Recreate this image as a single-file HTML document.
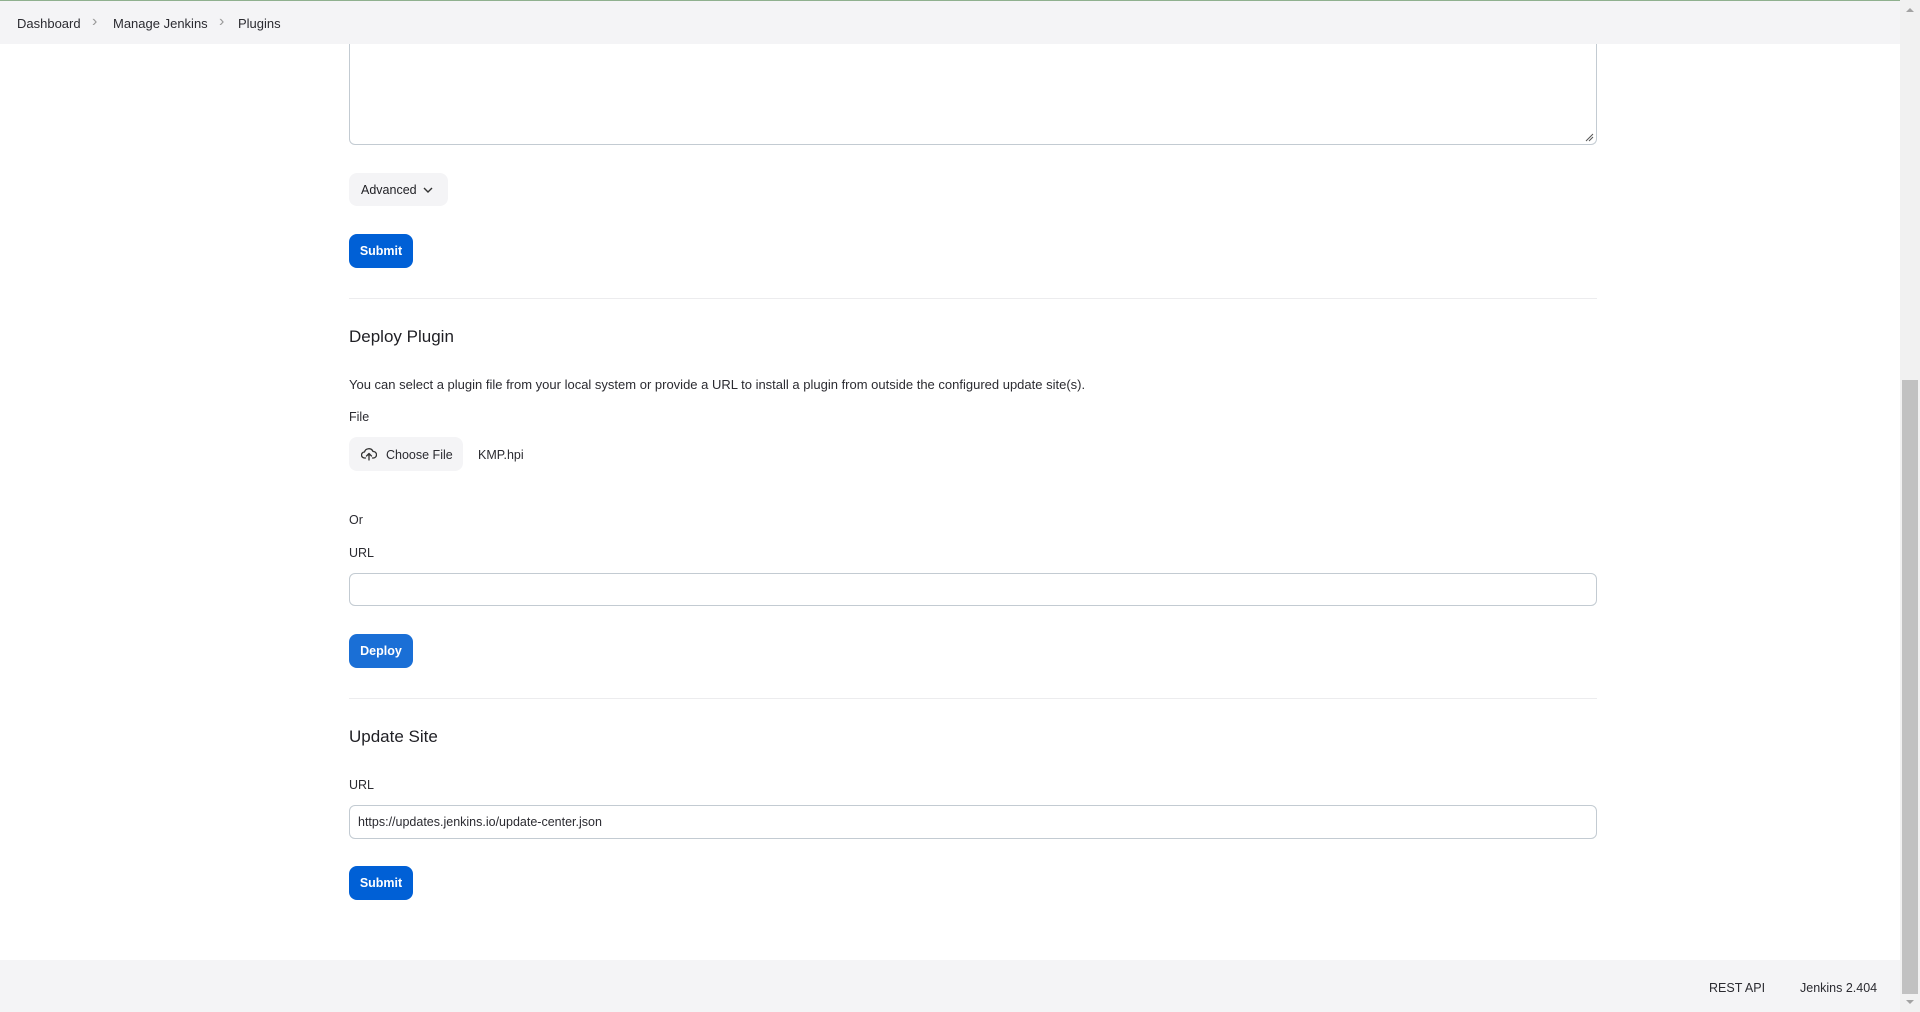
<!DOCTYPE html>
<html><head><meta charset="utf-8"><style>
*{box-sizing:border-box;margin:0;padding:0}
body{width:1920px;height:1012px;overflow:hidden;background:#fff;font-family:"Liberation Sans",sans-serif;color:#1f1f24;position:relative}
.a{position:absolute;white-space:nowrap}
.hdr{position:absolute;left:0;top:0;width:1900px;height:44px;background:#f4f4f6;border-top:1px solid #8fb08f}
.bc{position:absolute;top:15px;font-size:13px;color:#2b2b31}
.sep{position:absolute;top:12px;font-size:16px;color:#999}
.box{position:absolute;left:349px;width:1248px;border:1.5px solid #c3cbd2;border-radius:6px;background:#fff}
.btn{position:absolute;left:349px;width:64px;height:34px;background:#0060d6;border-radius:8px;color:#fff;font-weight:bold;font-size:12.5px;text-align:center;line-height:35px}
.hr{position:absolute;left:349px;width:1248px;height:1px;background:#ececee}
.h{position:absolute;left:349px;font-size:17px;color:#1f1f24}
.t{position:absolute;font-size:12.5px;color:#2b2b31}
</style></head><body>
<div class="hdr">
<span class="bc" style="left:17px">Dashboard</span><span class="sep" style="left:92px">&#8250;</span>
<span class="bc" style="left:113px">Manage Jenkins</span><span class="sep" style="left:219px">&#8250;</span>
<span class="bc" style="left:238px">Plugins</span>
</div>
<div class="box" style="top:44px;height:101px;border-top:none;border-radius:0 0 6px 6px"></div>
<svg class="a" style="left:1584px;top:132px" width="10" height="10"><path d="M2 9L9 2M5 9L9 5" stroke="#555" stroke-width="1"/></svg>
<div class="a" style="left:349px;top:173px;width:99px;height:33px;background:#f4f4f6;border-radius:8px;font-size:12.5px;line-height:35px;padding-left:12px">Advanced
<svg style="position:absolute;left:74px;top:13px" width="10" height="8"><path d="M1 2L5 6L9 2" fill="none" stroke="#333" stroke-width="1.4"/></svg></div>
<div class="btn" style="top:234px">Submit</div>
<div class="hr" style="top:298px"></div>
<div class="h" style="top:327px">Deploy Plugin</div>
<div class="t" style="left:349px;top:377px;font-size:13px">You can select a plugin file from your local system or provide a URL to install a plugin from outside the configured update site(s).</div>
<div class="t" style="left:349px;top:410px">File</div>
<div class="a" style="left:349px;top:437px;width:114px;height:34px;background:#f4f4f6;border-radius:8px;font-size:12.5px;line-height:36px;padding-left:37px;color:#2b2b31">Choose File
<svg style="position:absolute;left:12px;top:10px" width="16" height="14" viewBox="0 0 16 14"><path d="M4.5 11H3.5A3 3 0 0 1 3.5 5A4.5 4.5 0 0 1 12 4.5A3 3 0 0 1 12.5 11H11.5M8 13V6.5M5.5 9L8 6.5L10.5 9" fill="none" stroke="#333" stroke-width="1.3" stroke-linecap="round" stroke-linejoin="round"/></svg></div>
<div class="t" style="left:478px;top:448px">KMP.hpi</div>
<div class="t" style="left:349px;top:513px">Or</div>
<div class="t" style="left:349px;top:546px">URL</div>
<div class="box" style="top:573px;height:33px"></div>
<div class="btn" style="top:634px;background:#1a6fd6">Deploy</div>
<div class="hr" style="top:698px"></div>
<div class="h" style="top:727px">Update Site</div>
<div class="t" style="left:349px;top:778px">URL</div>
<div class="box" style="top:805px;height:34px;font-size:12.5px;line-height:33px;padding-left:8px;color:#2b2b31">https://updates.jenkins.io/update-center.json</div>
<div class="btn" style="top:866px">Submit</div>
<div class="a" style="left:0;top:960px;width:1900px;height:52px;background:#f4f4f6"></div>
<div class="t" style="left:1709px;top:981px">REST API</div>
<div class="t" style="left:1800px;top:981px">Jenkins 2.404</div>
<div class="a" style="left:1900px;top:0;width:20px;height:1012px;background:#f1f1f1"></div>
<div class="a" style="left:1902px;top:380px;width:16px;height:614px;background:#c1c1c1"></div>
<svg class="a" style="left:1904px;top:6px" width="12" height="8"><path d="M2 6L6 2L10 6Z" fill="#a3a3a3"/></svg>
<svg class="a" style="left:1904px;top:998px" width="12" height="8"><path d="M2 2L6 6L10 2Z" fill="#a3a3a3"/></svg>
</body></html>
